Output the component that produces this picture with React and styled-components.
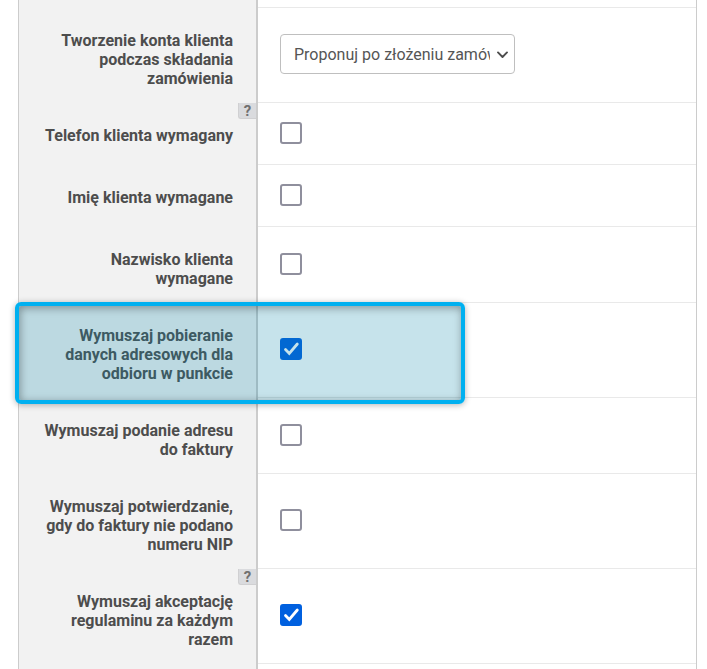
import styled, {createGlobalStyle, css} from "styled-components";
import {useState} from "react";

const GlobalStyle = createGlobalStyle`
  * {
    box-sizing: border-box;
  }

  body {
    margin: 0;
    background-color: #fff;
    color: #4d4d4d;
    font-family: Roboto, "Liberation Sans", sans-serif;
    font-size: 16px;
    line-height: 19px;
  }
`

const Panel = styled.form`
  display: flex;
  flex-direction: column;
  min-height: 100vh;
  margin: 0 10px 0 18px;
  border: solid #ccc;
  border-width: 0 1px;
`

const Row = styled.div`
  position: relative;
  display: grid;
  grid-template-columns: 239px 1fr;
  min-height: 62px;
`

const EdgeRow = styled(Row)`
  min-height: ${({last}) => last ? "0" : "8px"};
  ${({last}) => last && css`flex: 1;`}
`

const LabelCell = styled.div`
  position: relative;
  border-right: 2px solid #ccc;
  background-color: #f2f2f2;
`

const Label = styled.label`
  display: block;
  padding: 23px 23px 15px 20px;
  font-weight: 700;
  text-align: right;
`

const Field = styled.div`
  display: flex;
  align-items: center;
  padding: 0 22px 2px;
  border-bottom: ${({noLine}) => noLine ? "0" : "1px solid #e9e9e9"};
`

const Help = styled.button`
  position: absolute;
  top: 0;
  right: 0;
  width: 18px;
  height: 16px;
  padding: 0;
  border: solid #d0d0d2;
  border-width: 0 0 1px 1px;
  border-radius: 0 0 0 3px;
  background-color: #dadbde;
  color: #707070;
  font-family: inherit;
  font-size: 15px;
  font-weight: 700;
  line-height: 16px;
  cursor: pointer;
`

const SelectWrap = styled.div`
  position: relative;
  width: 235px;
`

const StyledSelect = styled.select`
  display: block;
  width: 100%;
  height: 40px;
  padding: 0 24px 0 13px;
  border: 1px solid #bfbfbf;
  border-radius: 4px;
  background-color: #fff;
  color: #555;
  font-family: inherit;
  font-size: 16px;
  appearance: none;
`

const Chevron = styled.svg`
  position: absolute;
  top: 16px;
  right: 7px;
  pointer-events: none;
`

const CheckWrap = styled.span`
  position: relative;
  display: block;
  width: 22px;
  height: 22px;
`

const Checkbox = styled.input`
  display: block;
  width: 22px;
  height: 22px;
  margin: 0;
  border: 2px solid #8f8f9d;
  border-radius: 3px;
  background-color: #fff;
  appearance: none;

  &:checked {
    border-color: #0060df;
    background-color: #0060df;
  }
`

const Tick = styled.svg`
  position: absolute;
  top: 0;
  left: 0;
  pointer-events: none;
`

const Highlight = styled.div`
  position: absolute;
  z-index: 1;
  top: -1px;
  bottom: -6px;
  left: -4px;
  width: 450px;
  max-width: 100%;
  border: 4px solid #00b0f0;
  border-radius: 6px;
  background-color: rgba(7, 133, 168, 0.23);
  background-clip: padding-box;
  box-shadow: 0 1px 6px rgba(0, 0, 0, 0.3), inset 1px 2px 8px rgba(0, 0, 0, 0.35);
  pointer-events: none;
`

const settings = [
  {id: "account", label: "Tworzenie konta klienta podczas składania zamówienia", type: "select"},
  {id: "phone", label: "Telefon klienta wymagany", help: true},
  {id: "firstName", label: "Imię klienta wymagane"},
  {id: "lastName", label: "Nazwisko klienta wymagane"},
  {id: "pickup", label: "Wymuszaj pobieranie danych adresowych dla odbioru w punkcie", checked: true, highlighted: true},
  {id: "invoice", label: "Wymuszaj podanie adresu do faktury"},
  {id: "nip", label: "Wymuszaj potwierdzanie, gdy do faktury nie podano numeru NIP"},
  {id: "terms", label: "Wymuszaj akceptację regulaminu za każdym razem", help: true, checked: true},
]

function SelectField({id}) {
  return (
    <SelectWrap>
      <StyledSelect id={id} defaultValue="after">
        <option value="after">Proponuj po złożeniu zamówienia</option>
      </StyledSelect>
      <Chevron width="11" height="10" viewBox="0 0 11 10" fill="none" stroke="#4d4d4d" strokeWidth="1.9">
        <path d="M1 2.4 5.5 7 10 2.4" strokeLinecap="round" strokeLinejoin="round" />
      </Chevron>
    </SelectWrap>
  )
}

function CheckField({id, initial}) {
  const [checked, setChecked] = useState(Boolean(initial));

  return (
    <CheckWrap>
      <Checkbox id={id} type="checkbox" checked={checked} onChange={(e) => setChecked(e.target.checked)} />
      {checked && (
        <Tick width="22" height="22" viewBox="0 0 22 22" fill="none" stroke="#fff" strokeWidth="2.8">
          <path d="M5.5 11.5 9.3 15.5 17.3 6" strokeLinecap="round" />
        </Tick>
      )}
    </CheckWrap>
  )
}

function SettingRow({setting}) {
  return (
    <Row>
      <LabelCell>
        <Label htmlFor={setting.id}>{setting.label}</Label>
        {setting.help && <Help type="button">?</Help>}
      </LabelCell>
      <Field>
        {setting.type === "select"
          ? <SelectField id={setting.id} />
          : <CheckField id={setting.id} initial={setting.checked} />}
      </Field>
      {setting.highlighted && <Highlight />}
    </Row>
  )
}

function App() {
  return (
    <>
      <GlobalStyle />
      <Panel>
        <EdgeRow>
          <LabelCell />
          <Field />
        </EdgeRow>
        {settings.map((setting) => <SettingRow key={setting.id} setting={setting} />)}
        <EdgeRow last>
          <LabelCell />
          <Field noLine />
        </EdgeRow>
      </Panel>
    </>
  )
}

export default App;
